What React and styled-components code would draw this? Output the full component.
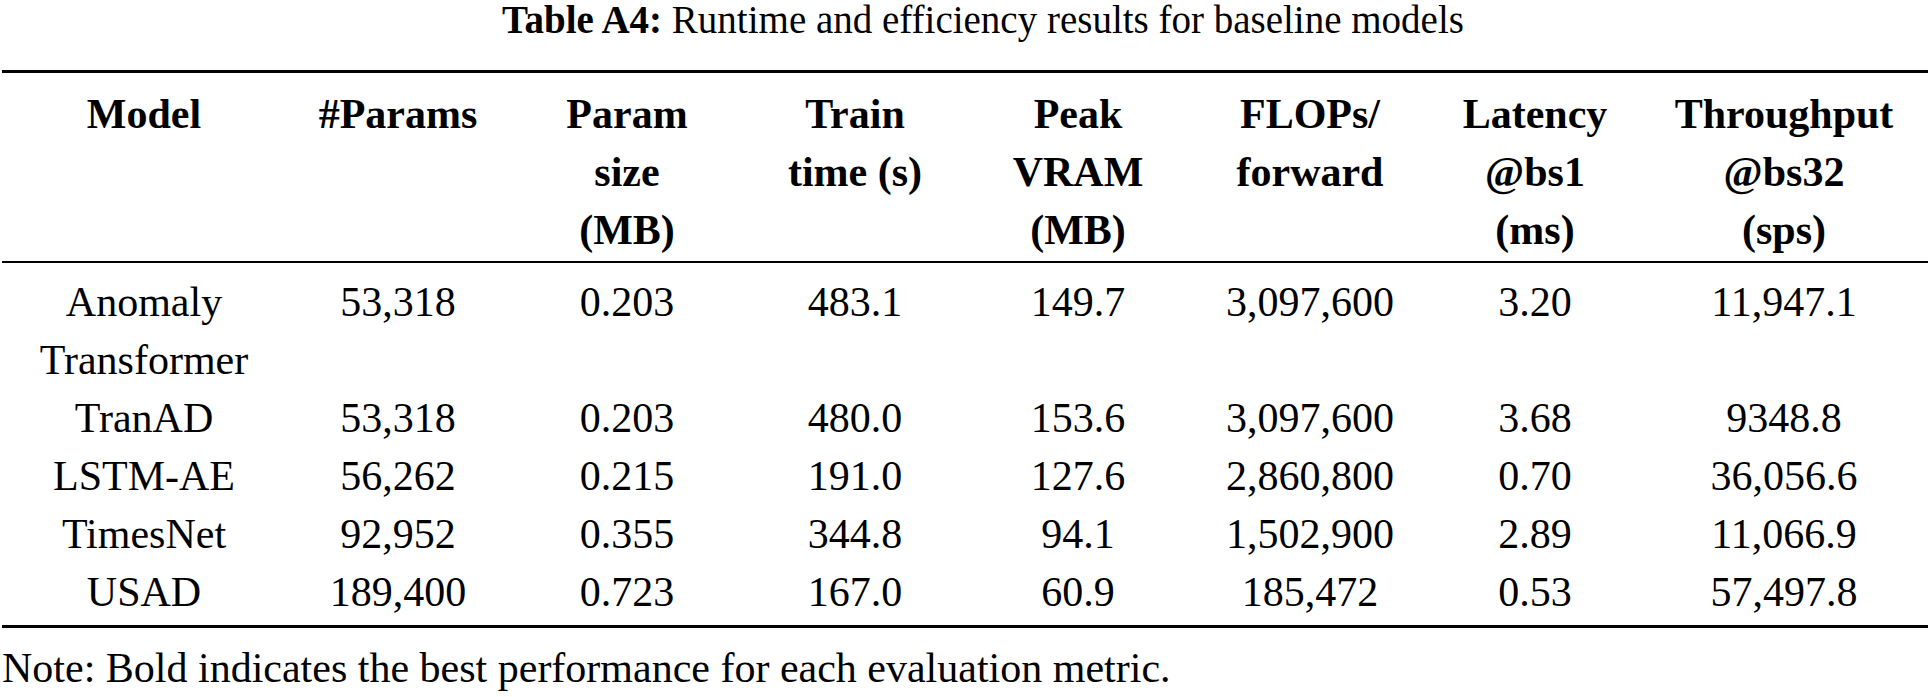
import React from "react";
import styled, { createGlobalStyle } from "styled-components";

const GlobalStyle = createGlobalStyle`
  html, body {
    margin: 0;
    padding: 0;
    background: #ffffff;
  }
  body {
    font-family: "Liberation Serif", "Times New Roman", serif;
    color: #000000;
  }
`;

const COLUMNS = "284px 224px 234px 222px 224px 240px 210px 288px";

const Page = styled.div`
  width: 1926px;
  padding-left: 2px;
`;

const Caption = styled.div`
  font-size: 39px;
  line-height: 40px;
  text-align: center;
  padding-left: 36px;
  margin-bottom: 30px;
  white-space: nowrap;

  b {
    font-weight: 700;
  }
`;

const Table = styled.div`
  border-top: 3px solid #000;
  border-bottom: 3px solid #000;
`;

const Grid = styled.div`
  display: grid;
  grid-template-columns: ${COLUMNS};
  justify-items: center;
  font-size: 42px;
  line-height: 58px;
`;

const Head = styled(Grid)`
  font-weight: 700;
  padding: 12px 0 2px;
  border-bottom: 2px solid #000;
`;

const Body = styled(Grid)`
  padding: 10px 0 4px;
`;

const Cell = styled.div`
  text-align: center;
  white-space: nowrap;
`;

const Note = styled.p`
  margin: 11px 0 0;
  font-size: 42px;
  line-height: 58px;
  white-space: nowrap;
`;

const headers = [
  ["Model"],
  ["#Params"],
  ["Param", "size", "(MB)"],
  ["Train", "time (s)"],
  ["Peak", "VRAM", "(MB)"],
  ["FLOPs/", "forward"],
  ["Latency", "@bs1", "(ms)"],
  ["Throughput", "@bs32", "(sps)"],
];

const rows = [
  [["Anomaly", "Transformer"], "53,318", "0.203", "483.1", "149.7", "3,097,600", "3.20", "11,947.1"],
  [["TranAD"], "53,318", "0.203", "480.0", "153.6", "3,097,600", "3.68", "9348.8"],
  [["LSTM-AE"], "56,262", "0.215", "191.0", "127.6", "2,860,800", "0.70", "36,056.6"],
  [["TimesNet"], "92,952", "0.355", "344.8", "94.1", "1,502,900", "2.89", "11,066.9"],
  [["USAD"], "189,400", "0.723", "167.0", "60.9", "185,472", "0.53", "57,497.8"],
];

function Lines({ lines }) {
  return lines.map((line, i) => <div key={i}>{line}</div>);
}

export default function App() {
  return (
    <Page>
      <GlobalStyle />
      <Caption>
        <b>Table A4:</b> Runtime and efficiency results for baseline models
      </Caption>
      <Table>
        <Head>
          {headers.map((h, i) => (
            <Cell key={i}>
              <Lines lines={h} />
            </Cell>
          ))}
        </Head>
        <Body>
          {rows.map(([model, ...values], r) => (
            <React.Fragment key={r}>
              <Cell>
                <Lines lines={model} />
              </Cell>
              {values.map((v, c) => (
                <Cell key={c}>{v}</Cell>
              ))}
            </React.Fragment>
          ))}
        </Body>
      </Table>
      <Note>Note: Bold indicates the best performance for each evaluation metric.</Note>
    </Page>
  );
}
